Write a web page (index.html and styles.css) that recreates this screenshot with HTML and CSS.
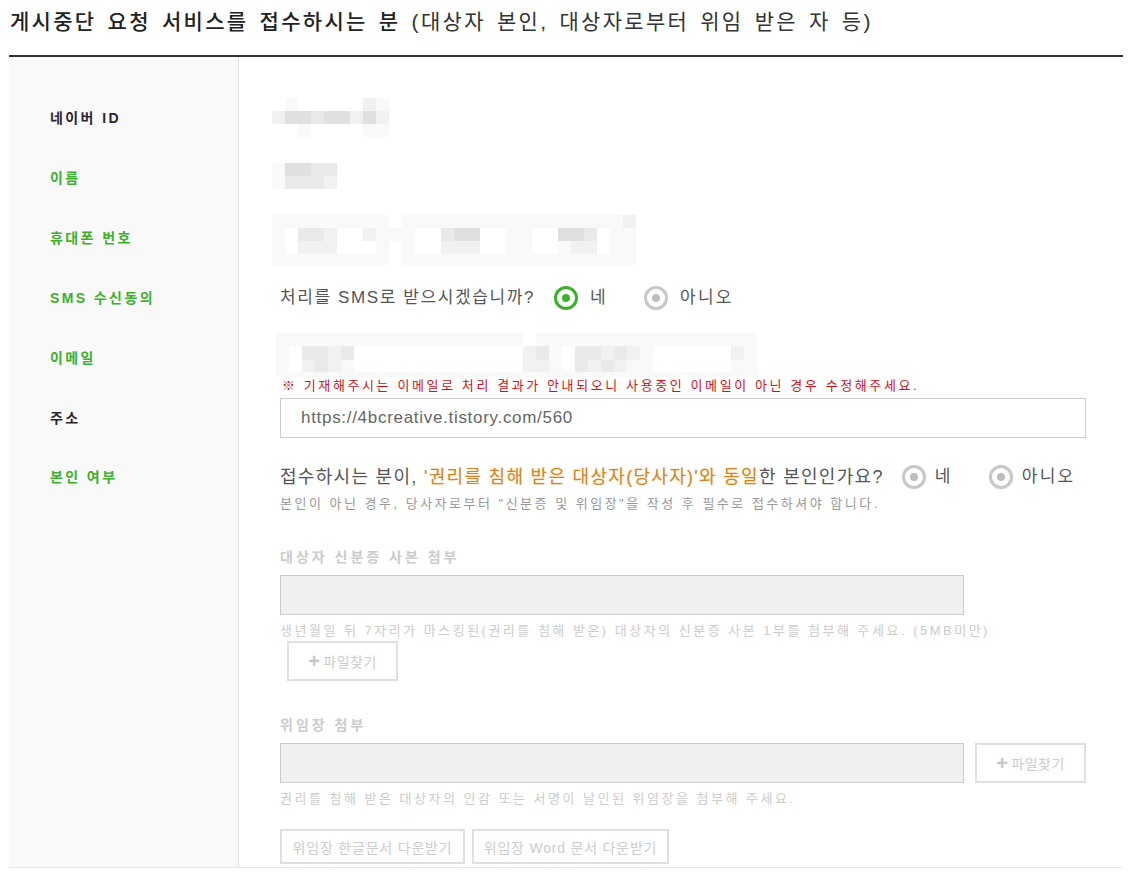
FILE: index.html
```html
<!DOCTYPE html>
<html lang="ko">
<head>
<meta charset="utf-8">
<title>게시중단 요청</title>
<link rel="stylesheet" href="styles.css">
</head>
<body>
<div class="page">
  <h2 class="title"><strong>게시중단 요청 서비스를 접수하시는 분</strong> (대상자 본인, 대상자로부터 위임 받은 자 등)</h2>
  <div class="form">
    <div class="lbl spacer"></div><div class="val spacer"></div>

    <div class="lbl dark">네이버 ID</div>
    <div class="val row60">
      <div class="mosaic m-id">
        <span class="m0"></span><span class="m1"></span><span class="m0"></span><span class="m0"></span><span class="m0"></span><span class="m0"></span><span class="m0"></span><span class="m2"></span><span class="m1"></span>
        <span class="m2"></span><span class="m4"></span><span class="m4"></span><span class="m3"></span><span class="m4"></span><span class="m4"></span><span class="m2"></span><span class="m4"></span><span class="m2"></span>
        <span class="m0"></span><span class="m0"></span><span class="m1"></span><span class="m0"></span><span class="m0"></span><span class="m0"></span><span class="m0"></span><span class="m1"></span><span class="m1"></span>
      </div>
    </div>

    <div class="lbl">이름</div>
    <div class="val row60">
      <div class="mosaic m-name">
        <span class="m1"></span><span class="m4"></span><span class="m4"></span><span class="m3"></span><span class="m3"></span>
        <span class="m1"></span><span class="m3"></span><span class="m3"></span><span class="m3"></span><span class="m2"></span>
      </div>
    </div>

    <div class="lbl">휴대폰 번호</div>
    <div class="val row60">
      <div class="mosaic m-phone">
        <span class="m1"></span><span class="m1"></span><span class="m1"></span><span class="m1"></span><span class="m1"></span><span class="m1"></span><span class="m1"></span><span class="m1"></span><span class="m1"></span><span class="m0"></span><span class="m1"></span><span class="m1"></span><span class="m1"></span><span class="m1"></span><span class="m1"></span><span class="m1"></span><span class="m1"></span><span class="m1"></span><span class="m1"></span><span class="m1"></span><span class="m1"></span><span class="m1"></span><span class="m1"></span><span class="m1"></span><span class="m1"></span><span class="m1"></span><span class="m1"></span><span class="m2"></span>
        <span class="m1"></span><span class="m0"></span><span class="m3"></span><span class="m3"></span><span class="m2"></span><span class="m0"></span><span class="m0"></span><span class="m2"></span><span class="m1"></span><span class="m1"></span><span class="m1"></span><span class="m0"></span><span class="m0"></span><span class="m3"></span><span class="m4"></span><span class="m4"></span><span class="m0"></span><span class="m0"></span><span class="m1"></span><span class="m1"></span><span class="m0"></span><span class="m0"></span><span class="m4"></span><span class="m4"></span><span class="m3"></span><span class="m0"></span><span class="m1"></span><span class="m1"></span>
        <span class="m1"></span><span class="m0"></span><span class="m2"></span><span class="m2"></span><span class="m2"></span><span class="m0"></span><span class="m0"></span><span class="m0"></span><span class="m1"></span><span class="m0"></span><span class="m1"></span><span class="m0"></span><span class="m0"></span><span class="m2"></span><span class="m2"></span><span class="m2"></span><span class="m0"></span><span class="m0"></span><span class="m1"></span><span class="m1"></span><span class="m0"></span><span class="m0"></span><span class="m1"></span><span class="m2"></span><span class="m2"></span><span class="m0"></span><span class="m1"></span><span class="m1"></span>
        <span class="m1"></span><span class="m1"></span><span class="m1"></span><span class="m1"></span><span class="m1"></span><span class="m1"></span><span class="m1"></span><span class="m1"></span><span class="m1"></span><span class="m0"></span><span class="m1"></span><span class="m1"></span><span class="m1"></span><span class="m1"></span><span class="m1"></span><span class="m1"></span><span class="m1"></span><span class="m1"></span><span class="m1"></span><span class="m1"></span><span class="m1"></span><span class="m1"></span><span class="m1"></span><span class="m1"></span><span class="m1"></span><span class="m1"></span><span class="m1"></span><span class="m1"></span>
      </div>
    </div>

    <div class="lbl">SMS 수신동의</div>
    <div class="val row60 inline">
      <span class="question">처리를 SMS로 받으시겠습니까?</span>
      <span class="options">
        <span class="opt"><span class="radio on"></span>네</span>
        <span class="opt"><span class="radio"></span>아니오</span>
      </span>
    </div>

    <div class="lbl">이메일</div>
    <div class="val email">
      <div class="mosaic m-email">
        <span class="m1"></span><span class="m1"></span><span class="m1"></span><span class="m1"></span><span class="m1"></span><span class="m1"></span><span class="m1"></span><span class="m1"></span><span class="m1"></span><span class="m1"></span><span class="m1"></span><span class="m1"></span><span class="m1"></span><span class="m1"></span><span class="m1"></span><span class="m1"></span><span class="m1"></span><span class="m1"></span><span class="m1"></span><span class="m0"></span><span class="m1"></span><span class="m1"></span><span class="m1"></span><span class="m1"></span><span class="m1"></span><span class="m1"></span><span class="m1"></span><span class="m1"></span><span class="m1"></span><span class="m1"></span><span class="m1"></span><span class="m1"></span><span class="m1"></span><span class="m1"></span><span class="m1"></span><span class="m1"></span><span class="m1"></span>
        <span class="m1"></span><span class="m0"></span><span class="m3"></span><span class="m3"></span><span class="m2"></span><span class="m3"></span><span class="m0"></span><span class="m0"></span><span class="m0"></span><span class="m0"></span><span class="m0"></span><span class="m0"></span><span class="m0"></span><span class="m0"></span><span class="m0"></span><span class="m0"></span><span class="m0"></span><span class="m0"></span><span class="m0"></span><span class="m2"></span><span class="m3"></span><span class="m1"></span><span class="m0"></span><span class="m3"></span><span class="m3"></span><span class="m2"></span><span class="m3"></span><span class="m2"></span><span class="m1"></span><span class="m0"></span><span class="m0"></span><span class="m0"></span><span class="m0"></span><span class="m0"></span><span class="m0"></span><span class="m2"></span><span class="m1"></span>
        <span class="m1"></span><span class="m0"></span><span class="m2"></span><span class="m3"></span><span class="m2"></span><span class="m1"></span><span class="m0"></span><span class="m0"></span><span class="m0"></span><span class="m0"></span><span class="m0"></span><span class="m0"></span><span class="m0"></span><span class="m0"></span><span class="m0"></span><span class="m0"></span><span class="m0"></span><span class="m0"></span><span class="m0"></span><span class="m2"></span><span class="m2"></span><span class="m1"></span><span class="m0"></span><span class="m3"></span><span class="m2"></span><span class="m3"></span><span class="m2"></span><span class="m1"></span><span class="m1"></span><span class="m0"></span><span class="m0"></span><span class="m0"></span><span class="m0"></span><span class="m0"></span><span class="m0"></span><span class="m1"></span><span class="m1"></span>
        <span class="m1"></span><span class="m1"></span><span class="m1"></span><span class="m1"></span><span class="m1"></span><span class="m1"></span><span class="m1"></span><span class="m1"></span><span class="m1"></span><span class="m1"></span><span class="m1"></span><span class="m1"></span><span class="m1"></span><span class="m1"></span><span class="m1"></span><span class="m1"></span><span class="m1"></span><span class="m1"></span><span class="m1"></span><span class="m1"></span><span class="m1"></span><span class="m1"></span><span class="m1"></span><span class="m1"></span><span class="m1"></span><span class="m1"></span><span class="m1"></span><span class="m1"></span><span class="m1"></span><span class="m1"></span><span class="m1"></span><span class="m1"></span><span class="m1"></span><span class="m1"></span><span class="m1"></span><span class="m1"></span><span class="m1"></span>
      </div>
      <p class="notice">※ 기재해주시는 이메일로 처리 결과가 안내되오니 사용중인 이메일이 아닌 경우 수정해주세요.</p>
    </div>

    <div class="lbl dark addr">주소</div>
    <div class="val">
      <div class="textbox">https://4bcreative.tistory.com/560</div>
    </div>

    <div class="lbl self">본인 여부</div>
    <div class="val last">
      <div class="inline q7">
        <span class="question big">접수하시는 분이, <em class="hl">'권리를 침해 받은 대상자(당사자)'와 동일</em>한 본인인가요?</span>
        <span class="options wide">
          <span class="opt"><span class="radio"></span>네</span>
          <span class="opt"><span class="radio"></span>아니오</span>
        </span>
      </div>
      <p class="note">본인이 아닌 경우, 당사자로부터 "신분증 및 위임장"을 작성 후 필수로 접수하셔야 합니다.</p>

      <h3 class="sub first">대상자 신분증 사본 첨부</h3>
      <div class="filebox"></div>
      <p class="help">생년월일 뒤 7자리가 마스킹된(권리를 침해 받은) 대상자의 신분증 사본 1부를 첨부해 주세요. (5MB미만)</p>
      <div class="btn-row indent">
        <span class="btn find"><b>+</b>파일찾기</span>
      </div>

      <h3 class="sub second">위임장 첨부</h3>
      <div class="file-line">
        <div class="filebox"></div>
        <span class="btn find"><b>+</b>파일찾기</span>
      </div>
      <p class="help">권리를 침해 받은 대상자의 인감 또는 서명이 날인된 위임장을 첨부해 주세요.</p>
      <div class="btn-row downloads">
        <span class="btn dl">위임장 한글문서 다운받기</span>
        <span class="btn dl">위임장 Word 문서 다운받기</span>
      </div>
    </div>
  </div>
</div>
</body>
</html>
```
FILE: styles.css
```css
* { box-sizing: border-box; }
html, body { margin: 0; padding: 0; background: #fff; }
body {
  font-family: "Liberation Sans", "Noto Sans CJK KR", sans-serif;
  color: #333;
}
.page {
  margin-left: 9px;
  width: 1114px;
}
.title {
  margin: 0;
  padding: 8px 0 0 1px;
  height: 55px;
  font-size: 21px;
  line-height: 28px;
  font-weight: normal;
  color: #333;
  word-spacing: 3px;
  letter-spacing: 2.3px;
  white-space: nowrap;
}
.title strong { font-weight: 500; color: #222; }

.form {
  display: grid;
  grid-template-columns: 230px 1fr;
  border-top: 2px solid #333;
  border-bottom: 1px solid #e6e6e6;
}
.lbl {
  background: #f9f9f9;
  border-right: 1px solid #e3e3e3;
  padding: 22px 0 0 41px;
  font-size: 14px;
  line-height: 16px;
  font-weight: bold;
  letter-spacing: 2.4px;
  color: #3cb02c;
}
.lbl.dark { color: #2d2530; }
.lbl.spacer { height: 31px; padding: 0; }
.val.spacer { height: 31px; }
.lbl.addr { padding-top: 12px; }
.lbl.self { padding-top: 31px; }

.val { padding: 0 37px 0 41px; }
.row60 { height: 60px; }
.inline { display: flex; align-items: center; }

.mosaic { display: grid; grid-auto-rows: 13px; }
.mosaic span { display: block; }
.m0 { background: #fff; }
.m1 { background: #f9f9f9; }
.m2 { background: #f1f1f1; }
.m3 { background: #e9e9e9; }
.m4 { background: #e0e0e0; }
.m-id { grid-template-columns: repeat(9, 13px); margin: 10px 0 0 -8px; }
.m-name { grid-template-columns: repeat(5, 13px); margin: 15px 0 0 -8px; }
.m-phone { grid-template-columns: repeat(28, 13px); margin: 7px 0 0 -8px; height: 50px; overflow: hidden; }
.m-email { grid-template-columns: repeat(37, 13px); margin: 5px 0 0 -4px; height: 44px; overflow: hidden; grid-template-rows: 13px 14px 12px 5px; }

.question {
  font-size: 17px;
  line-height: 22px;
  color: #555;
  letter-spacing: 1.6px;
  white-space: nowrap;
}
.options { display: inline-flex; align-items: center; gap: 36px; margin-left: 19px; }
.opt {
  display: inline-flex;
  align-items: center;
  gap: 12px;
  font-size: 17px;
  line-height: 22px;
  color: #555;
  letter-spacing: 2.3px;
  white-space: nowrap;
}
.radio {
  flex: none;
  width: 24px;
  height: 24px;
  border-radius: 50%;
  border: 3px solid #c8c8c8;
  display: inline-flex;
  align-items: center;
  justify-content: center;
  box-shadow: 0 0 1px #ddd;
}
.radio::after {
  content: "";
  width: 8px;
  height: 8px;
  border-radius: 50%;
  background: #bdbdbd;
}
.radio.on { border-color: #3cb12d; }
.radio.on::after { background: #3cb12d; }

.email { padding-bottom: 3px; }
.notice {
  margin: 0;
  font-size: 13px;
  line-height: 18px;
  color: #d0111b;
  letter-spacing: 2.6px;
  padding-left: 2px;
  white-space: nowrap;
}
.textbox {
  height: 40px;
  border: 1px solid #cccccc;
  padding: 0 20px;
  font-size: 17px;
  line-height: 38px;
  color: #666;
  letter-spacing: 0.7px;
}

.last { padding-bottom: 3px; }
.q7 { margin-top: 27px; height: 24px; }
.question.big { font-size: 18px; line-height: 24px; letter-spacing: 1.3px; }
.hl {
  font-style: normal;
  color: #d2822b;
  text-shadow: 0 0 3px #fff0c4, 0 0 2px #fff3d0;
}
.options.wide { margin-left: 18px; gap: 36px; }
.options.wide .opt { gap: 9px; }

.note {
  margin: 6px 0 0;
  font-size: 13px;
  line-height: 18px;
  color: #999;
  letter-spacing: 2.5px;
  white-space: nowrap;
}
.sub {
  margin: 0;
  font-size: 14px;
  line-height: 18px;
  font-weight: bold;
  color: #cccccc;
  letter-spacing: 3px;
}
.sub.first { margin-top: 35px; }
.sub.second { margin-top: 35px; }
.filebox {
  width: 684px;
  height: 40px;
  background: #f0f0f0;
  border: 1px solid #cccccc;
}
.sub + .filebox, .sub + .file-line { margin-top: 9px; }
.file-line { display: flex; gap: 11px; }
.help {
  margin: 7px 0 0;
  font-size: 13px;
  line-height: 18px;
  color: #cccccc;
  letter-spacing: 2.5px;
  white-space: nowrap;
}
.help + .btn-row.downloads { margin-top: 21px; }
.btn-row { display: flex; gap: 7px; }
.btn-row.indent { padding-left: 7px; margin-top: 1px; }
.btn {
  display: inline-flex;
  align-items: center;
  justify-content: center;
  border: 2px solid #e0e0e0;
  background: #fff;
  color: #cccccc;
  font-size: 14px;
  letter-spacing: 0.5px;
  white-space: nowrap;
}
.btn.find { width: 111px; height: 40px; gap: 3px; }
.btn.find b { font-size: 20px; font-weight: bold; line-height: 1; color: #c8c8c8; }
.btn.dl { height: 35px; padding: 0 6px; letter-spacing: 0.8px; }
.btn.dl:first-child { width: 185px; }
.btn.dl:last-child { width: 197px; }
```
